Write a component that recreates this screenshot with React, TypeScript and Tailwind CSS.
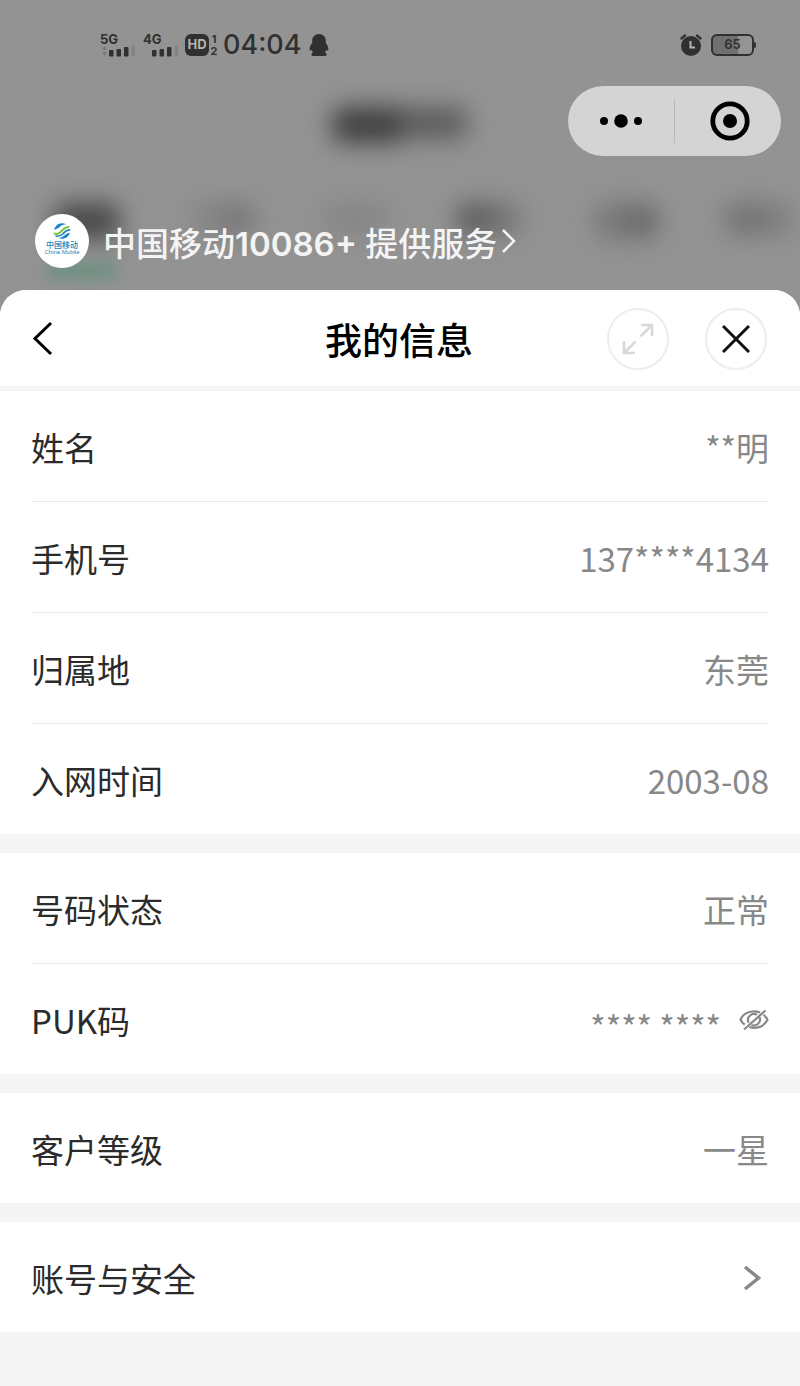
import React from 'react';

const cjk = "font-['Noto_Sans_CJK_SC',sans-serif]";

const SignalBars = ({ label, arrows }: { label: string; arrows?: boolean }) => (
  <div className="flex w-9 flex-col">
    <span className="font-['Inter',sans-serif] text-[13px] leading-3 font-bold">{label}</span>
    <svg viewBox="0 0 36 12" className="h-3 w-9" fill="currentColor" aria-hidden="true">
      {arrows && <path d="M2 5l2.500-4 2.500 4zM2 7l2.500 4 2.500-4z" opacity="0.25" />}
      <rect x="9" y="5" width="4.500" height="6.500" rx="1" />
      <rect x="16.500" y="4" width="4.500" height="7.500" rx="1" />
      <rect x="24" y="2" width="4.500" height="9.500" rx="1" />
      <rect x="31.500" y="0" width="3.500" height="11.500" rx="1" opacity="0.15" />
    </svg>
  </div>
);

const StatusBar = () => (
  <div className="flex h-6 items-center justify-between pr-11 pl-[100px] text-[#303030]">
    <div className="flex items-center">
      <div className="flex gap-[7px]">
        <SignalBars label="5G" arrows />
        <SignalBars label="4G" />
      </div>
      <span className="ml-1.5 flex h-[22px] w-6 items-center justify-center rounded-md bg-[#303030] font-['Inter',sans-serif] text-[13px] font-bold text-[#b4b4b4]">
        HD
      </span>
      <span className="flex w-2.5 flex-col items-center font-['Inter',sans-serif] text-[11px] leading-3 font-bold">
        <span>1</span>
        <span>2</span>
      </span>
      <time className="ml-1 font-['Inter',sans-serif] text-[27px] leading-6 font-medium">04:04</time>
      <svg viewBox="0 0 20 24" className="ml-2 h-6 w-5" fill="currentColor" aria-label="QQ">
        <path d="M10 1c-4.200 0-6.800 3-6.800 6.500v2.200C1.600 12 .4 14.500.6 17c.1 1.200.9 1 2-.3.300 1 .8 2 1.500 2.800-1.200.5-1.800 1.200-1.800 2 0 1.300 1.800 1.700 4 1.500h7.400c2.200.2 4-.2 4-1.500 0-.8-.6-1.500-1.800-2 .7-.8 1.200-1.800 1.500-2.800 1.100 1.300 1.900 1.500 2 .3.200-2.500-1-5-2.600-7.300V7.500C16.800 4 14.200 1 10 1z" />
      </svg>
    </div>
    <div className="flex items-center gap-[9px]">
      <svg viewBox="0 0 22 22" className="size-[22px]" aria-label="闹钟">
        <circle cx="11" cy="12" r="10" fill="currentColor" />
        <path d="M1.500 4.500L5 1.500M20.500 4.500L17 1.500" stroke="currentColor" strokeWidth="2.400" strokeLinecap="round" />
        <path d="M10.500 7v6.500H15" fill="none" stroke="#b4b4b4" strokeWidth="2" />
      </svg>
      <div className="flex items-center">
        <span className="flex h-[22px] w-[43px] items-center justify-center rounded-md border-2 border-current bg-linear-to-r from-[#707070] from-63% to-[#949494] to-63% font-['Inter',sans-serif] text-[13px] font-semibold">
          65
        </span>
        <span className="h-1.5 w-0.5 rounded-r bg-current" />
      </div>
    </div>
  </div>
);

const Backdrop = () => (
  <div className="absolute inset-0 overflow-hidden pt-[107px]" aria-hidden="true">
    <div className="flex justify-center blur-[12px]">
      <div className="h-9 w-[68px] rounded-l-xl bg-[#404040]" />
      <div className="h-8 w-[68px] rounded-r-xl bg-[#5c5c5c]" />
    </div>
    <div className="mt-[60px] flex justify-between pr-2 pl-[54px] blur-[12px]">
      <div className="h-9 w-[66px] rounded-xl bg-[#484848]" />
      <div className="h-8 w-[66px] rounded-xl bg-linear-to-r from-[#8c8c8c] to-[#707070]" />
      <div className="h-8 w-[66px] rounded-xl bg-[#868686]" />
      <div className="h-8 w-[66px] rounded-xl bg-linear-to-r from-[#505050] to-[#808080]" />
      <div className="h-9 w-[66px] rounded-xl bg-linear-to-r from-[#808080] to-[#646464]" />
      <div className="h-8 w-[66px] rounded-xl bg-linear-to-r from-[#6c6c6c] to-[#808080]" />
    </div>
    <div className="mt-6 ml-[46px] h-4 w-[72px] rounded-lg bg-[#699080] blur-[8px]" />
  </div>
);

const Capsule = () => (
  <div className="flex h-[70px] w-[213px] items-center rounded-full bg-[#d4d4d4]">
    <button type="button" aria-label="更多" className="flex w-[106px] justify-center">
      <svg viewBox="0 0 42 14" className="h-3.5 w-[42px]">
        <circle cx="4" cy="7" r="4" />
        <circle cx="21" cy="7" r="6.800" />
        <circle cx="38" cy="7" r="4" />
      </svg>
    </button>
    <span className="h-11 w-px bg-[#b8b8b8]" />
    <button type="button" aria-label="关闭小程序" className="flex flex-1 justify-center pl-1">
      <svg viewBox="0 0 40 40" className="size-10">
        <circle cx="20" cy="20" r="17.200" fill="none" stroke="#000" strokeWidth="4.800" />
        <circle cx="20" cy="20" r="7" />
      </svg>
    </button>
  </div>
);

const Logo = () => (
  <span className="flex size-[54px] flex-col items-center rounded-full bg-white pt-2">
    <svg viewBox="0 0 18 18" className="size-[18px]" fill="none" strokeLinecap="round" aria-hidden="true">
      <path d="M1.200 8C1.800 4 5 1.200 9 1.200c1.500 0 2.800.3 4 1C9.500 2 7.500 4.500 5.500 6 4 7 2.500 7 1.200 8z" fill="#1a86c8" />
      <path d="M1.500 11.500c2 .8 4.200.2 6-1.500 2.500-2.500 4.500-5 8-5" stroke="#7cc243" strokeWidth="2" />
      <path d="M1.800 9.200c2 .2 3.600-.6 5-2C9 5 11 3 14 3.500" stroke="#fff" strokeWidth="0.800" />
      <path d="M3 14c3 .8 5-.3 7-2.300 2-2 3.800-4 6.600-3.800" stroke="#1a86c8" strokeWidth="1.600" />
      <path d="M16.800 10.500c-.6 3.700-3.800 6.300-7.800 6.300-1.400 0-2.600-.3-3.700-.8 3.500.2 5.500-2 7.500-3.700 1.300-1 2.700-1 4-1.800z" fill="#1a86c8" />
    </svg>
    <span className="text-[8px] leading-[9px] font-medium text-[#2484bb]">中国移动</span>
    <span className="font-['Liberation_Sans',sans-serif] text-[6px] leading-[6px] text-[#2484bb]">China Mobile</span>
  </span>
);

const Row = ({ label, children }: { label: string; children: React.ReactNode }) => (
  <div className="box-content flex h-[108px] items-center justify-between pt-0.5">
    <dt className="text-[#2b2b2b]">{label}</dt>
    <dd className="flex items-center text-[#888]">{children}</dd>
  </div>
);

const Group = ({ children }: { children: React.ReactNode }) => (
  <dl className="divide-y divide-[#e8e8e8] bg-white px-[31px]">{children}</dl>
);

const App = () => {
  return (
    <div className={`${cjk} flex min-h-screen flex-col bg-[#939393]`}>
      <header className="relative pt-[33px] pb-[22px]">
        <Backdrop />
        <div className="relative">
          <StatusBar />
          <div className="mt-[29px] flex justify-end pr-[19px]">
            <Capsule />
          </div>
          <button type="button" className="mt-[58px] ml-[35px] flex h-[54px] items-center text-[33px] leading-[48px] font-medium text-[#f4f4f4]">
            <Logo />
            <span className="ml-3.5 pt-1">
              中国移动<span className="font-['Inter',sans-serif] font-semibold">10086+ </span>提供服务
            </span>
            <svg viewBox="0 0 16 26" className="ml-1 h-[26px] w-4" fill="none" stroke="currentColor" strokeWidth="2.500" aria-hidden="true">
              <path d="M2 2l11 11L2 24" />
            </svg>
          </button>
        </div>
      </header>

      <main className="flex flex-1 flex-col overflow-hidden rounded-t-[26px] bg-[#f5f5f5] text-[33px] leading-[48px]">
        <div className="mb-[5px] grid h-24 grid-cols-3 items-center bg-white pt-0.5 pr-[33px] pl-[31px]">
          <button type="button" aria-label="返回" className="justify-self-start">
            <svg viewBox="0 0 22 36" className="h-9 w-[22px]" fill="none" stroke="#000" strokeWidth="3">
              <path d="M20 2L4 17.500 20 33" />
            </svg>
          </button>
          <h1 className="justify-self-center text-[37px] font-medium text-black">我的信息</h1>
          <div className="flex gap-9 justify-self-end">
            <button type="button" aria-label="全屏" className="flex size-[62px] items-center justify-center rounded-full border-2 border-[#ededed]">
              <svg viewBox="0 0 32 32" className="size-8" fill="none" stroke="#d8d8d8" strokeWidth="2.600">
                <path d="M19 2h11v11M30 2L18.500 13.500M2 18v12h11M2 30l11.500-11.500" />
              </svg>
            </button>
            <button type="button" aria-label="关闭" className="flex size-[62px] items-center justify-center rounded-full border-2 border-[#ededed]">
              <svg viewBox="0 0 28 28" className="size-7" stroke="#111" strokeWidth="3">
                <path d="M1 1l26 26M27 1L1 27" />
              </svg>
            </button>
          </div>
        </div>

        <div className="flex flex-col gap-[19px]">
          <Group>
            <Row label="姓名">**明</Row>
            <Row label="手机号">137****4134</Row>
            <Row label="归属地">东莞</Row>
            <Row label="入网时间">2003-08</Row>
          </Group>
          <Group>
            <Row label="号码状态">正常</Row>
            <Row label="PUK码">
              <span className="pt-3">**** ****</span>
              <button type="button" aria-label="显示PUK码" className="ml-[18px]">
                <svg viewBox="0 0 30 22" className="h-[22px] w-[30px]" fill="none" stroke="currentColor" strokeWidth="2.200">
                  <path d="M21 3.600C19.200 2.800 17.200 2.400 15 2.400 8.500 2.400 3.500 6 1.500 10.500c.8 2 2.300 3.800 4.200 5.200M24.500 5.800c1.800 1.300 3.200 3 4 5-2.200 4.500-7.300 8-13.500 8-1.700 0-3.300-.3-4.700-.8" />
                  <path d="M18 5.800a6 6 0 0 0-8.300 8M20.500 8.200a6 6 0 0 1-8 7.800M26.500 1.500L5 20.500" />
                </svg>
              </button>
            </Row>
          </Group>
          <Group>
            <Row label="客户等级">一星</Row>
          </Group>
          <nav className="bg-white px-[31px]">
            <a href="#security" className="flex h-[110px] items-center justify-between pt-0.5 text-[#2b2b2b]">
              账号与安全
              <svg viewBox="0 0 18 26" className="mr-2 h-[26px] w-[18px]" fill="none" stroke="#888" strokeWidth="3.500" aria-hidden="true">
                <path d="M2 2l13.500 11L2 24" />
              </svg>
            </a>
          </nav>
        </div>
      </main>
    </div>
  );
};

export default App;
